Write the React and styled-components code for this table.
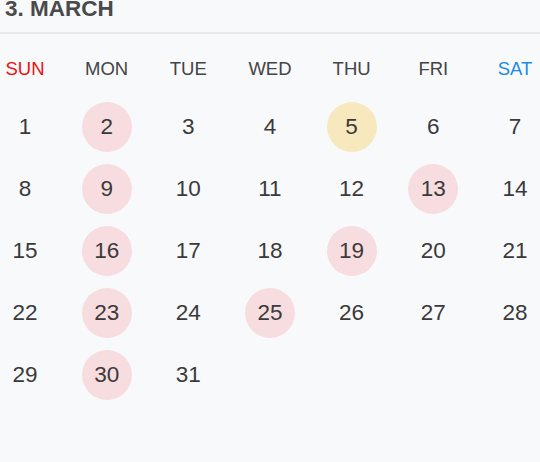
import React from "react";
import styled, { createGlobalStyle } from "styled-components";

const GlobalStyle = createGlobalStyle`
  html, body {
    margin: 0;
    padding: 0;
    background: #f8f9fb;
  }
  body {
    font-family: "Liberation Sans", Arial, sans-serif;
  }
`;

const WEEKDAYS = ["SUN", "MON", "TUE", "WED", "THU", "FRI", "SAT"];
const PINK = [2, 9, 13, 16, 19, 23, 25, 30];
const YELLOW = [5];

const App = () => {
  const days = [];
  for (let d = 1; d <= 31; d++) days.push(d);

  const markOf = (d) => {
    if (YELLOW.includes(d)) return "yellow";
    if (PINK.includes(d)) return "pink";
    return "none";
  };

  return (
    <Wrapper>
      <GlobalStyle />
      <Title>3. MARCH</Title>
      <Divider />
      <Grid>
        {WEEKDAYS.map((w, i) => (
          <Weekday key={w} $tone={i === 0 ? "sun" : i === 6 ? "sat" : "normal"}>
            {w}
          </Weekday>
        ))}
      </Grid>
      <DaysGrid>
        {days.map((d) => (
          <Day key={d} $mark={markOf(d)}>
            {d}
          </Day>
        ))}
      </DaysGrid>
    </Wrapper>
  );
};

const Wrapper = styled.div`
  width: 540px;
  height: 462px;
  background: #f8f9fb;
  overflow: hidden;
`;

const Title = styled.h2`
  margin: 0;
  padding: 0 0 0 5px;
  height: 32px;
  line-height: 18px;
  font-size: 22.5px;
  font-weight: bold;
  color: #4a4a4a;
`;

const Divider = styled.div`
  height: 2px;
  background: #e6e8eb;
`;

const Grid = styled.div`
  display: grid;
  grid-template-columns: repeat(7, 50px);
  justify-content: space-between;
  margin-top: 24px;
  height: 22px;
  align-items: center;
`;

const toneColor = {
  sun: "#ee1111",
  sat: "#1a8be6",
  normal: "#444444",
};

const Weekday = styled.div`
  text-align: center;
  font-size: 18.5px;
  line-height: 22px;
  color: ${(p) => toneColor[p.$tone]};
`;

const markColor = {
  pink: "#f7dde0",
  yellow: "#f7e9bd",
  none: "transparent",
};

const DaysGrid = styled.div`
  display: grid;
  grid-template-columns: repeat(7, 50px);
  grid-auto-rows: 50px;
  justify-content: space-between;
  row-gap: 12px;
  margin-top: 22px;
`;

const Day = styled.div`
  display: flex;
  align-items: center;
  justify-content: center;
  border-radius: 50%;
  font-size: 22.5px;
  color: #3a3a3a;
  background: ${(p) => markColor[p.$mark]};
`;

export default App;
